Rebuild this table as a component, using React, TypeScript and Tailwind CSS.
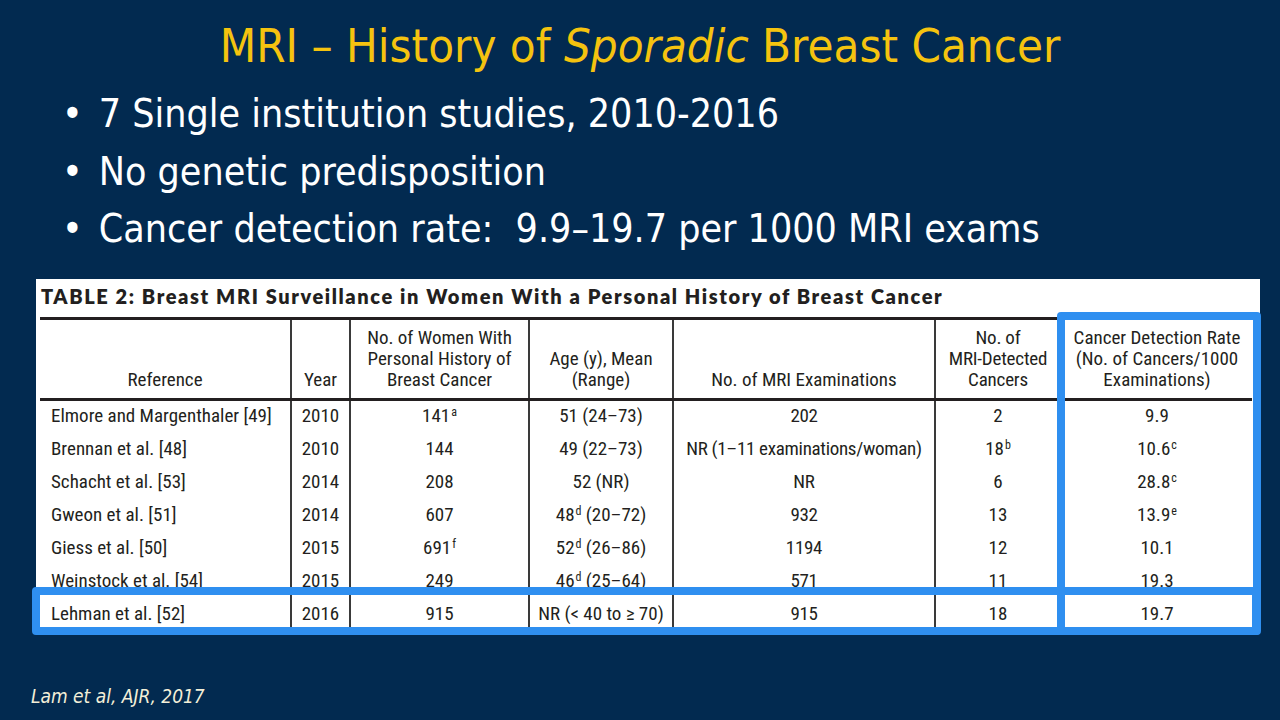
import React from "react";

const slideFont = { fontFamily: '"DejaVu Sans Condensed", "DejaVu Sans", sans-serif' };
const tableFont = { fontFamily: '"Liberation Sans Narrow", "Roboto Condensed", "Roboto", sans-serif' };
const titleFont = { fontFamily: 'Lato, "Open Sans", sans-serif' };

type Row = {
  ref: string;
  year: string;
  women: React.ReactNode;
  age: React.ReactNode;
  mri: string;
  det: React.ReactNode;
  rate: React.ReactNode;
};

const Sup = ({ c }: { c: string }) => (
  <span className="text-[12px] leading-none align-[6px] ml-[1px]">{c}</span>
);

const rows: Row[] = [
  { ref: "Elmore and Margenthaler [49]", year: "2010", women: <>141<Sup c="a" /></>, age: "51 (24–73)", mri: "202", det: "2", rate: "9.9" },
  { ref: "Brennan et al. [48]", year: "2010", women: "144", age: "49 (22–73)", mri: "NR (1–11 examinations/woman)", det: <>18<Sup c="b" /></>, rate: <>10.6<Sup c="c" /></> },
  { ref: "Schacht et al. [53]", year: "2014", women: "208", age: "52 (NR)", mri: "NR", det: "6", rate: <>28.8<Sup c="c" /></> },
  { ref: "Gweon et al. [51]", year: "2014", women: "607", age: <>48<Sup c="d" /> (20–72)</>, mri: "932", det: "13", rate: <>13.9<Sup c="e" /></> },
  { ref: "Giess et al. [50]", year: "2015", women: <>691<Sup c="f" /></>, age: <>52<Sup c="d" /> (26–86)</>, mri: "1194", det: "12", rate: "10.1" },
  { ref: "Weinstock et al. [54]", year: "2015", women: "249", age: <>46<Sup c="d" /> (25–64)</>, mri: "571", det: "11", rate: "19.3" },
  { ref: "Lehman et al. [52]", year: "2016", women: "915", age: "NR (< 40 to ≥ 70)", mri: "915", det: "18", rate: "19.7" },
];

export default function App() {
  const vline = "border-r-2 border-[#3a3a3a]";
  const th = "font-normal text-center pb-[8px]";
  return (
    <div className="w-[1280px] h-[720px] bg-[#022a50] overflow-hidden flex flex-col" style={slideFont}>
      <h1 className="text-center text-[#f5c30f] text-[47px] leading-[56px] pt-[18px]">
        MRI – History of <span className="italic">Sporadic</span> Breast Cancer
      </h1>
      <ul className="mt-[11px] ml-[62px] flex flex-col text-white text-[39px] leading-[57.5px]">
        <li className="flex gap-[16px]"><span>•</span><span>7 Single institution studies, 2010-2016</span></li>
        <li className="flex gap-[16px]"><span>•</span><span>No genetic predisposition</span></li>
        <li className="flex gap-[16px]"><span>•</span><span>Cancer detection rate:&nbsp; 9.9–19.7 per 1000 MRI exams</span></li>
      </ul>
      <div className="relative ml-[36px] mt-[21px] w-[1224px] h-[352px] bg-white pl-[4px] pr-[8px] pt-[5px]">
        <div className="text-[20px] font-extrabold text-[#231f20] leading-[24px] pl-[1px] tracking-[1.6px]" style={titleFont}>
          TABLE 2: Breast MRI Surveillance in Women With a Personal History of Breast Cancer
        </div>
        <table className="mt-[9px] w-[1212px] border-collapse text-[19px] text-[#231f20] table-fixed" style={tableFont}>
          <colgroup>
            <col className="w-[251px]" />
            <col className="w-[59px]" />
            <col className="w-[179px]" />
            <col className="w-[144px]" />
            <col className="w-[262px]" />
            <col className="w-[126px]" />
            <col className="w-[191px]" />
          </colgroup>
          <thead>
            <tr className="border-t-[3px] border-b-[3px] border-[#231f20] h-[81px] align-bottom leading-[21px]">
              <th className={`${th} ${vline}`}>Reference</th>
              <th className={`${th} ${vline}`}>Year</th>
              <th className={`${th} ${vline}`}>No. of Women With<br />Personal History of<br />Breast Cancer</th>
              <th className={`${th} ${vline}`}>Age (y), Mean<br />(Range)</th>
              <th className={`${th} ${vline}`}>No. of MRI Examinations</th>
              <th className={`${th} ${vline} tracking-[-0.2px]`}>No. of<br />MRI-Detected<br />Cancers</th>
              <th className={th}>Cancer Detection Rate<br />(No. of Cancers/1000<br />Examinations)</th>
            </tr>
          </thead>
          <tbody>
            {rows.map((r) => (
              <tr key={r.ref} className="h-[33px] leading-[20px]">
                <td className={`pl-[11px] ${vline}`}>{r.ref}</td>
                <td className={`text-center ${vline}`}>{r.year}</td>
                <td className={`text-center ${vline}`}>{r.women}</td>
                <td className={`text-center ${vline}`}>{r.age}</td>
                <td className={`text-center ${vline} tracking-[-0.3px]`}>{r.mri}</td>
                <td className={`text-center ${vline}`}>{r.det}</td>
                <td className="text-center">{r.rate}</td>
              </tr>
            ))}
          </tbody>
        </table>
        <div className="absolute left-[1021px] top-[33px] w-[204px] h-[323px] border-[8px] border-[#2f8ff0] rounded-[4px]" />
        <div className="absolute left-[-4px] top-[308px] w-[1228px] h-[48px] border-[8px] border-[#2f8ff0] rounded-[4px]" />
      </div>
      <div className="mt-auto mb-[12px] ml-[31px] italic text-[19px] leading-[24px] text-[#f3efd8]">Lam et al, AJR, 2017</div>
    </div>
  );
}
